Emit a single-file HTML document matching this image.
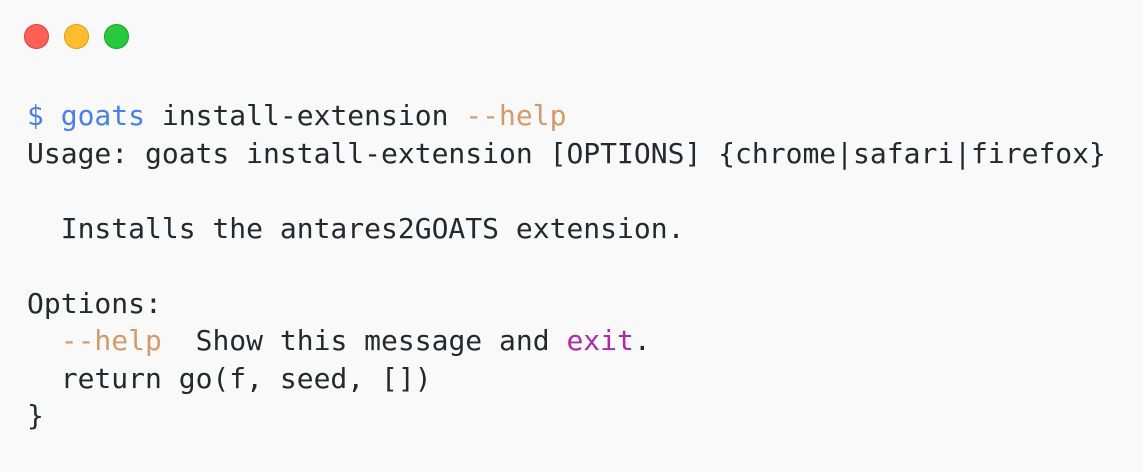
<!DOCTYPE html>
<html><head><meta charset="utf-8"><style>
html,body{margin:0;padding:0;background:#f9f9f9;width:1143px;height:472px;overflow:hidden}
.d{position:absolute;top:24px;width:25px;height:25px;border-radius:50%}
pre{position:absolute;left:27px;top:97px;margin:0;font-family:"DejaVu Sans Mono","Liberation Mono",monospace;font-size:28px;line-height:37.5px;color:#24292e}
.b{color:#4a7fe8}.o{color:#d59a68}.p{color:#b02aa8}
</style></head><body>
<div class="d" style="left:24px;background:#fe5f57;box-shadow:inset 0 0 0 1px #e2463f"></div>
<div class="d" style="left:64px;background:#febc2e;box-shadow:inset 0 0 0 1px #e1a116"></div>
<div class="d" style="left:104px;background:#28c840;box-shadow:inset 0 0 0 1px #1aab29"></div>
<pre><span class="b">$ goats</span> install-extension <span class="o">--help</span>
Usage: goats install-extension [OPTIONS] {chrome|safari|firefox}

  Installs the antares2GOATS extension.

Options:
  <span class="o">--help</span>  Show this message and <span class="p">exit</span>.
  return go(f, seed, [])
}</pre>
</body></html>
